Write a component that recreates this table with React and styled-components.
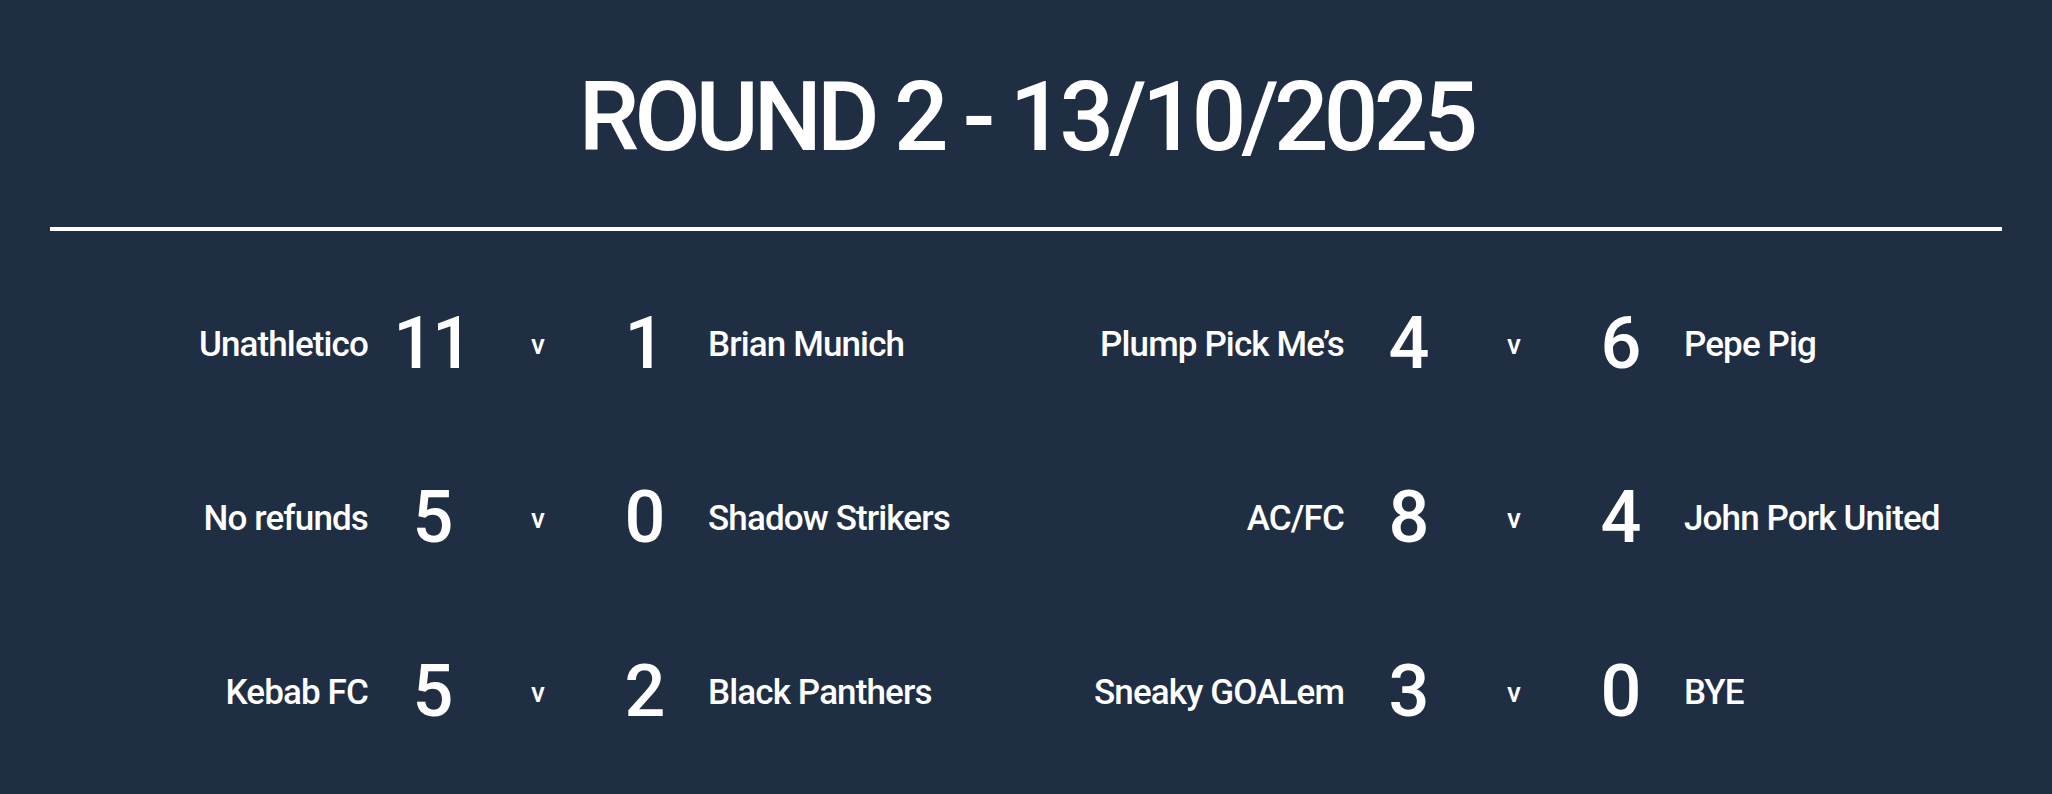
import React from 'react';
import styled, { createGlobalStyle } from 'styled-components';

const GlobalStyle = createGlobalStyle`
  html, body {
    margin: 0;
    padding: 0;
    background: #202e44;
  }
  body {
    font-family: Roboto, "Liberation Sans", sans-serif;
    color: #ffffff;
  }
`;

const Page = styled.div`
  width: 2052px;
  height: 794px;
  box-sizing: border-box;
  padding: 69px 50px 0;
  background: #202e44;
  overflow: hidden;
`;

const Title = styled.h1`
  margin: 0;
  font-size: 96px;
  line-height: 1;
  font-weight: 500;
  text-align: center;
  letter-spacing: -0.05em;
`;

const Divider = styled.hr`
  margin: 62px 0 0;
  border: 0;
  height: 4px;
  background: #ffffff;
`;

const Fixtures = styled.div`
  margin-top: 26px;
  display: grid;
  grid-template-columns: 1fr 1fr;
  grid-auto-rows: 174px;
`;

const Match = styled.div`
  display: grid;
  grid-template-columns: 1fr 128px 84px 128px 1fr;
  align-items: center;
`;

const Team = styled.span`
  font-size: 35px;
  font-weight: 500;
  letter-spacing: -0.025em;
  white-space: nowrap;
  text-align: ${p => (p.$home ? 'right' : 'left')};
`;

const Score = styled.span`
  font-size: 72px;
  line-height: 1;
  font-weight: 500;
  letter-spacing: -0.03em;
  text-align: center;
`;

const Versus = styled.span`
  font-size: 28px;
  font-weight: 500;
  text-align: center;
`;

const fixtures = [
  { home: 'Unathletico', hs: 11, as: 1, away: 'Brian Munich' },
  { home: 'Plump Pick Me’s', hs: 4, as: 6, away: 'Pepe Pig' },
  { home: 'No refunds', hs: 5, as: 0, away: 'Shadow Strikers' },
  { home: 'AC/FC', hs: 8, as: 4, away: 'John Pork United' },
  { home: 'Kebab FC', hs: 5, as: 2, away: 'Black Panthers' },
  { home: 'Sneaky GOALem', hs: 3, as: 0, away: 'BYE' },
];

const App = () => (
  <Page>
    <GlobalStyle />
    <Title>ROUND 2 - 13/10/2025</Title>
    <Divider />
    <Fixtures>
      {fixtures.map(f => (
        <Match key={f.home}>
          <Team $home>{f.home}</Team>
          <Score>{f.hs}</Score>
          <Versus>v</Versus>
          <Score>{f.as}</Score>
          <Team>{f.away}</Team>
        </Match>
      ))}
    </Fixtures>
  </Page>
);

export default App;
